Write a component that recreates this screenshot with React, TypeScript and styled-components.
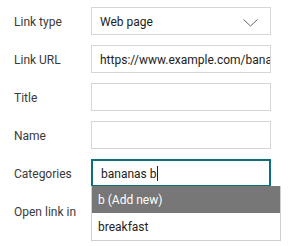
import React from "react";
import styled, { createGlobalStyle } from "styled-components";

const Global = createGlobalStyle`
  html, body { margin: 0; padding: 0; background: #fff; }
  body { font-family: Roboto, "Noto Sans", Arial, sans-serif; min-height: 246px; }
  * { box-sizing: border-box; }
`;

const Form = styled.div`
  position: relative;
  display: flex;
  flex-direction: column;
  gap: 10px;
  padding: 7px 0 0 14px;
  width: 293px;
  height: 246px;
  overflow: hidden;
`;

const Row = styled.div`
  display: grid;
  grid-template-columns: 77px 180px;
  align-items: center;
  height: 28px;
`;

const Label = styled.label`
  font-size: 12px;
  color: #3a3a3a;
  padding-top: 1px;
`;

const Box = styled.div<{ $focused?: boolean }>`
  position: relative;
  height: 28px;
  border: ${(p) => (p.$focused ? "2px solid #0c6f7b" : "1px solid #d6d6d6")};
  display: flex;
  align-items: center;
  padding-left: 8px;
  padding-top: 1px;
  font-size: 12px;
  color: #222;
  overflow: hidden;
  white-space: nowrap;
  background: #fff;
`;

const Caret = styled.span`
  display: inline-block;
  width: 1px;
  height: 15px;
  background: #222;
  margin-left: 1px;
`;

const Chevron = styled.svg`
  position: absolute;
  right: 12px;
  top: 11px;
`;

const Menu = styled.div`
  position: absolute;
  left: 91px;
  top: 186px;
  width: 190px;
  border: 1px solid #cfcfcf;
  border-top: none;
  background: #fff;
  display: flex;
  flex-direction: column;
`;

const Option = styled.div<{ $active?: boolean }>`
  height: 27px;
  display: flex;
  align-items: center;
  padding-left: 6px;
  padding-top: 1px;
  font-size: 12px;
  color: ${(p) => (p.$active ? "#fff" : "#222")};
  background: ${(p) => (p.$active ? "#777777" : "#fff")};
`;

export default function App() {
  return (
    <>
      <Global />
      <Form>
        <Row>
          <Label>Link type</Label>
          <Box>
            Web page
            <Chevron width="15" height="8" viewBox="0 0 15 8">
              <polyline points="0.5,0.5 7.5,7 14.5,0.5" fill="none" stroke="#666" strokeWidth="1" />
            </Chevron>
          </Box>
        </Row>
        <Row>
          <Label>Link URL</Label>
          <Box>https://www.example.com/bananas</Box>
        </Row>
        <Row>
          <Label>Title</Label>
          <Box />
        </Row>
        <Row>
          <Label>Name</Label>
          <Box />
        </Row>
        <Row>
          <Label>Categories</Label>
          <Box $focused>
            bananas b<Caret />
          </Box>
        </Row>
        <Row>
          <Label>Open link in</Label>
          <Box />
        </Row>
        <Menu>
          <Option $active>b (Add new)</Option>
          <Option>breakfast</Option>
        </Menu>
      </Form>
    </>
  );
}
